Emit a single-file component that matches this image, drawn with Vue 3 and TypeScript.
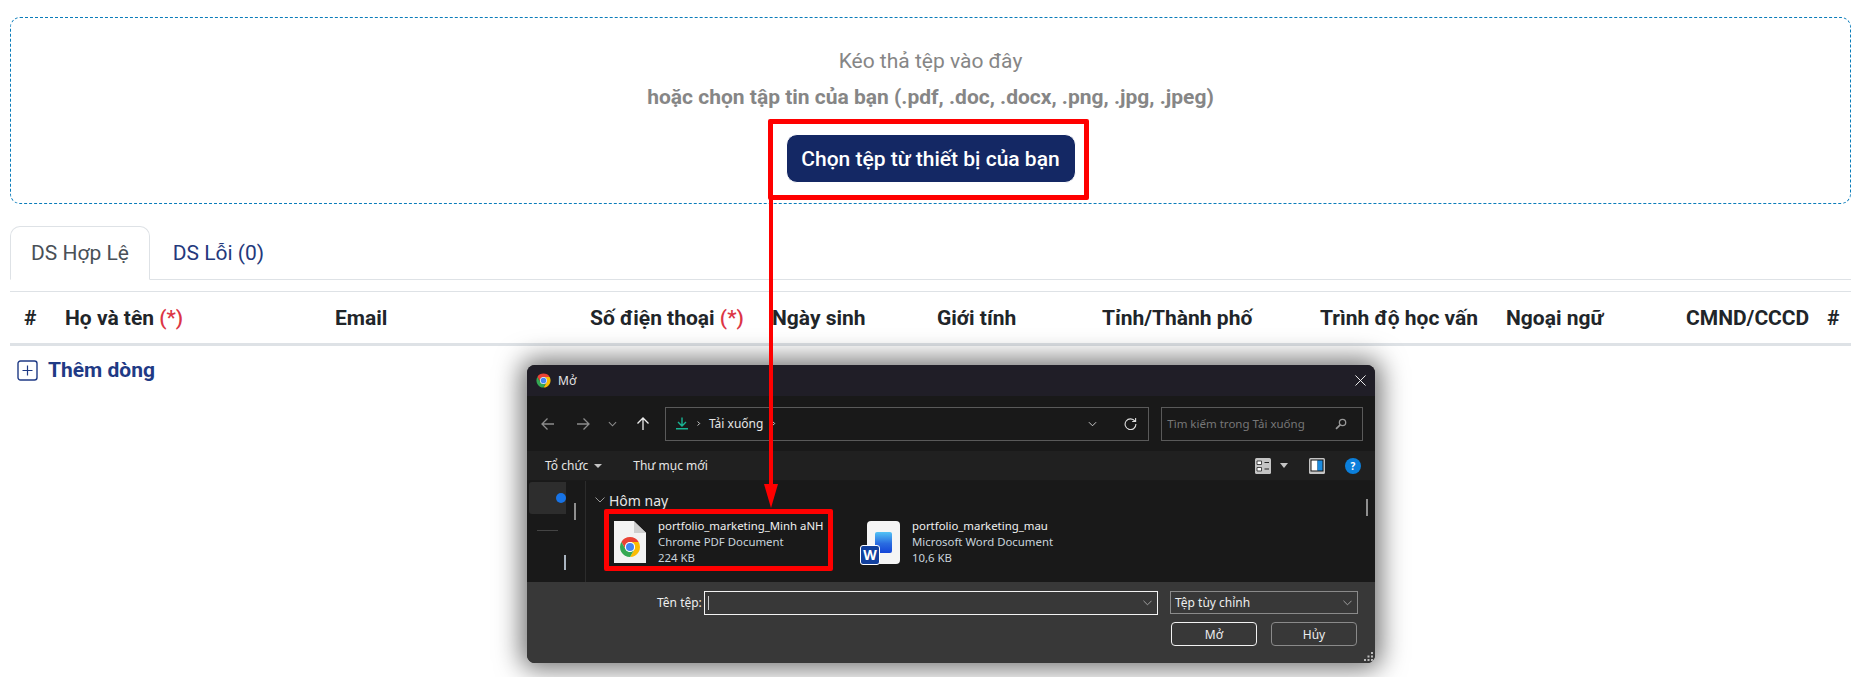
<script setup lang="ts">
const columns = [
  { label: 'Họ và tên', required: true },
  { label: 'Email' },
  { label: 'Số điện thoại', required: true },
  { label: 'Ngày sinh' },
  { label: 'Giới tính' },
  { label: 'Tỉnh/Thành phố' },
  { label: 'Trình độ học vấn' },
  { label: 'Ngoại ngữ' },
  { label: 'CMND/CCCD' },
]
</script>

<template>
  <div class="page">
    <section class="dropzone">
      <p class="drop-title">Kéo thả tệp vào đây</p>
      <p class="drop-sub">hoặc chọn tập tin của bạn (.pdf, .doc, .docx, .png, .jpg, .jpeg)</p>
      <button class="pick-btn">Chọn tệp từ thiết bị của bạn</button>
    </section>

    <nav class="tabs">
      <a class="tab active">DS Hợp Lệ</a>
      <a class="tab">DS Lỗi (0)</a>
    </nav>

    <div class="thead">
      <div class="th">#</div>
      <div v-for="col in columns" :key="col.label" class="th">
        {{ col.label }} <span v-if="col.required" class="req">(*)</span>
      </div>
      <div class="th">#</div>
    </div>

    <a class="add-row">
      <svg class="add-icon" viewBox="0 0 21 21" width="21" height="21" fill="none" stroke="#1f3a85">
        <rect x="1" y="1" width="19" height="19" rx="2.5" stroke-width="1.4" />
        <path d="M10.5 5.5v10M5.5 10.5h10" stroke-width="1.2" />
      </svg>
      Thêm dòng
    </a>

    <!-- pasted file dialog -->
    <div class="dialog">
      <div class="d-title">
        <svg viewBox="0 0 48 48" width="17" height="17">
          <path fill="#ea4335" d="M6.68 14A20 20 0 0 1 41.32 14H24A10 10 0 0 0 15.34 29Z" />
          <path fill="#fbbc04" d="M41.32 14A20 20 0 0 1 24 44L32.66 29A10 10 0 0 0 24 14Z" />
          <path fill="#34a853" d="M24 44A20 20 0 0 1 6.68 14L15.34 29A10 10 0 0 0 32.66 29Z" />
          <circle cx="24" cy="24" r="10" fill="#fff" />
          <circle cx="24" cy="24" r="8" fill="#4285f4" />
        </svg>
        <span>Mở</span>
        <svg class="d-close" viewBox="0 0 12 12" width="11" height="11" stroke="#fff" stroke-width="1"><path d="M.5.5l11 11M11.5.5l-11 11" /></svg>
      </div>

      <div class="d-nav">
        <span class="nav-slot">
          <svg viewBox="0 0 14 14" width="14" height="14" fill="none" stroke="#8c8c8c" stroke-width="1.3"><path d="M13 7H1M6.5 1.5L1 7l5.5 5.5" /></svg>
        </span>
        <span class="nav-slot gap">
          <svg viewBox="0 0 14 14" width="14" height="14" fill="none" stroke="#8c8c8c" stroke-width="1.3"><path d="M1 7h12M7.500 1.500L13 7l-5.500 5.500" /></svg>
        </span>
        <span class="nav-slot">
          <svg viewBox="0 0 10 6" width="9" height="6" fill="none" stroke="#8c8c8c" stroke-width="1.2"><path d="M1 1l4 4 4-4" /></svg>
        </span>
        <span class="nav-slot">
          <svg viewBox="0 0 14 14" width="14" height="14" fill="none" stroke="#eee" stroke-width="1.3"><path d="M7 13V1M1.500 6.500L7 1l5.500 5.500" /></svg>
        </span>
        <div class="address">
          <svg viewBox="0 0 12 12" width="12" height="13" fill="none" stroke="#19b394" stroke-width="1.4"><path d="M6 0v8M2 4.500L6 8.500l4-4M0 11.300h12" /></svg>
          <svg class="crumb" viewBox="0 0 6 8" width="4" height="7" fill="none" stroke="#eee" stroke-width="1.3"><path d="M1 1l3 3-3 3" /></svg>
          <span class="addr-text">Tải xuống</span>
          <svg class="crumb" viewBox="0 0 6 8" width="4" height="7" fill="none" stroke="#eee" stroke-width="1.3"><path d="M1 1l3 3-3 3" /></svg>
          <svg class="addr-chev" viewBox="0 0 10 6" width="9" height="6" fill="none" stroke="#ddd" stroke-width="1"><path d="M1 1l4 4 4-4" /></svg>
          <svg class="addr-refresh" viewBox="0 0 14 14" width="13" height="13" fill="none" stroke="#ddd" stroke-width="1.2"><path d="M11.800 4.500A5.800 5.800 0 1 0 12.800 7.500M12.500 1v3.800H8.800" /></svg>
        </div>
        <div class="search">
          <span>Tìm kiếm trong Tải xuống</span>
          <svg viewBox="0 0 14 14" width="12" height="12" fill="none" stroke="#999" stroke-width="1.5"><circle cx="8.800" cy="5.200" r="3.700" /><path d="M6 8L1.200 12.800" stroke-width="2" /></svg>
        </div>
      </div>

      <div class="d-tools">
        <span class="tool">Tổ chức</span>
        <i class="caret" />
        <span class="tool new-folder">Thư mục mới</span>
        <div class="tool-right">
          <svg viewBox="0 0 16 16" width="16" height="16">
            <rect width="16" height="16" rx="1.500" fill="#c4c4c4" />
            <path d="M2 3h4.500v3.500H2zM2 9.500h4.500V13H2z" fill="#fff" stroke="#222" stroke-width=".8" />
            <path d="M9.500 4.500H14M9.500 11H14" stroke="#222" />
          </svg>
          <i class="caret wide" />
          <svg class="pane" viewBox="0 0 16 16" width="16" height="16">
            <rect width="16" height="16" rx="1.500" fill="#c4c4c4" />
            <rect x="1.500" y="1.500" width="13" height="12" fill="#111" />
            <rect x="2.500" y="2.500" width="6" height="10" fill="#fff" />
            <rect x="8.500" y="2.500" width="5" height="10" fill="#1a8be0" />
          </svg>
          <span class="help">?</span>
        </div>
      </div>

      <div class="d-body">
        <aside class="d-side">
          <div class="side-tree">
            <div class="side-active">
              <svg viewBox="0 0 6 10" width="5" height="9" fill="none" stroke="#ddd" stroke-width="1.300"><path d="M1 1l4 4-4 4" /></svg>
              <i class="side-dot" />
            </div>
            <i class="side-sep" />
            <i class="side-pip" />
          </div>
          <div class="side-bar">
            <i class="bar-thumb" />
          </div>
        </aside>
        <div class="d-files">
          <div class="group">
            <svg viewBox="0 0 10 6" width="10" height="6" fill="none" stroke="#999"><path d="M.5.500L5 5 9.500.5" /></svg>
            <span>Hôm nay</span>
          </div>
          <div class="file-row">
            <div class="file first">
              <div class="doc-pdf">
                <i class="doc-fold" />
                <svg viewBox="0 0 48 48" width="24" height="24">
                  <path fill="#ea4335" d="M6.68 14A20 20 0 0 1 41.32 14H24A10 10 0 0 0 15.34 29Z" />
                  <path fill="#fbbc04" d="M41.32 14A20 20 0 0 1 24 44L32.66 29A10 10 0 0 0 24 14Z" />
                  <path fill="#34a853" d="M24 44A20 20 0 0 1 6.68 14L15.34 29A10 10 0 0 0 32.66 29Z" />
                  <circle cx="24" cy="24" r="10" fill="#fff" />
                  <circle cx="24" cy="24" r="8" fill="#4285f4" />
                </svg>
              </div>
              <div class="file-meta">
                <span class="file-name">portfolio_marketing_Minh aNH</span>
                <span>Chrome PDF Document</span>
                <span>224 KB</span>
              </div>
            </div>
            <div class="file">
              <div class="doc-word">
                <i class="word-blue" />
                <span class="word-badge">W</span>
              </div>
              <div class="file-meta">
                <span class="file-name">portfolio_marketing_mau</span>
                <span>Microsoft Word Document</span>
                <span>10,6 KB</span>
              </div>
            </div>
          </div>
          <div class="group clipped">
            <svg viewBox="0 0 6 10" width="6" height="10" fill="none" stroke="#999"><path d="M.5.500L5 5 .5 9.500" /></svg>
            <span>Tuần trước</span>
          </div>
        </div>
        <div class="d-scroll"><i /></div>
      </div>

      <div class="d-foot">
        <div class="foot-row">
          <label>Tên tệp:</label>
          <div class="name-input">
            <i class="text-caret" />
            <svg viewBox="0 0 10 6" width="9" height="6" fill="none" stroke="#aaa"><path d="M.5.500L5 5 9.500.5" /></svg>
          </div>
          <div class="type-select">
            <span>Tệp tùy chỉnh</span>
            <svg viewBox="0 0 10 6" width="9" height="6" fill="none" stroke="#aaa"><path d="M.5.500L5 5 9.500.5" /></svg>
          </div>
        </div>
        <div class="foot-btns">
          <button class="d-btn primary">Mở</button>
          <button class="d-btn">Hủy</button>
        </div>
        <svg class="grip" viewBox="0 0 9 9" width="9" height="9" fill="#bbb">
          <path d="M7 0h2v2H7zM3.500 3.500h2v2h-2zM7 3.500h2v2H7zM0 7h2v2H0zM3.500 7h2v2h-2zM7 7h2v2H7z" />
        </svg>
      </div>
    </div>

    <!-- red annotations on top of the screenshot -->
    <div class="mark mark-btn" />
    <div class="mark mark-file" />
    <svg class="arrow" viewBox="0 0 16 312" width="16" height="312">
      <path d="M6 0h4v288H6z" fill="#f00" />
      <path d="M1 286h14L8 310z" fill="#f00" />
    </svg>
  </div>
</template>

<style scoped>
.page {
  position: relative;
  width: 1864px;
  height: 677px;
  padding: 17px 13px 0 10px;
  box-sizing: border-box;
  overflow: hidden;
  background: #fff;
  font-family: Roboto, "Liberation Sans", sans-serif;
  color: #212529;
}

.dropzone {
  height: 187px;
  box-sizing: border-box;
  border: 1px dashed #0a7cba;
  border-radius: 10px;
  display: flex;
  flex-direction: column;
  align-items: center;
  padding-top: 31px;
}

.drop-title {
  margin: 0;
  font-size: 21px;
  line-height: 24px;
  color: #868686;
}

.drop-sub {
  margin: 12px 0 0;
  font-size: 21px;
  line-height: 24px;
  font-weight: 700;
  color: #868686;
}

.pick-btn {
  margin-top: 25px;
  width: 290px;
  height: 49px;
  border: 1px solid #fff;
  border-radius: 11px;
  background: #142864;
  color: #fff;
  font-family: inherit;
  font-size: 21px;
  font-weight: 500;
}

.tabs {
  display: flex;
  margin-top: 22px;
  height: 54px;
  border-bottom: 1px solid #dee2e6;
  box-sizing: border-box;
}

.tab {
  width: 140px;
  height: 54px;
  box-sizing: border-box;
  border: 1px solid transparent;
  border-radius: 10px 10px 0 0;
  display: flex;
  align-items: center;
  justify-content: center;
  font-size: 21px;
  color: #24397c;
}

.tab.active {
  color: #495057;
  border-color: #dee2e6 #dee2e6 #fff;
  background: #fff;
}

.tab:not(.active) {
  width: 137px;
}

.thead {
  margin-top: 11px;
  height: 55px;
  box-sizing: border-box;
  border-top: 1px solid #dee2e6;
  border-bottom: 3px solid #dee2e6;
  display: grid;
  grid-template-columns: 41px 270px 255px 182px 165px 165px 218px 186px 180px 141px 38px;
  align-items: center;
}

.th {
  padding-left: 14px;
  white-space: nowrap;
  font-size: 21px;
  font-weight: 700;
}

.req {
  color: #dc3545;
  font-weight: 500;
}

.add-row {
  display: flex;
  align-items: center;
  gap: 10px;
  margin: 12px 0 0 7px;
  font-size: 21px;
  font-weight: 700;
  color: #1f3a85;
}

/* dialog */
.dialog {
  position: absolute;
  left: 527px;
  top: 365px;
  width: 848px;
  height: 298px;
  display: flex;
  flex-direction: column;
  border-radius: 8px;
  overflow: hidden;
  box-shadow: 0 0 26px 6px rgba(0, 0, 0, 0.55);
  font-family: "Noto Sans", "Open Sans", sans-serif;
  font-size: 12px;
  color: #e6e6e6;
  background: #191919;
}

.d-title {
  height: 31px;
  flex: none;
  display: flex;
  align-items: center;
  gap: 6px;
  padding: 0 9px 0 8px;
  background: #201e27;
}

.d-close {
  margin-left: auto;
}

.d-nav {
  height: 55px;
  flex: none;
  display: flex;
  align-items: center;
  padding-left: 6px;
  box-sizing: border-box;
  padding-right: 12px;
}

.nav-slot {
  width: 30px;
  display: flex;
  justify-content: center;
}

.nav-slot.gap {
  margin-left: 5px;
}

.address {
  margin-left: 7px;
  width: 485px;
  height: 34px;
  box-sizing: border-box;
  border: 1px solid #5a5a5a;
  display: flex;
  align-items: center;
  padding-left: 10px;
}

.crumb {
  margin-left: 9px;
}

.addr-text {
  margin-left: 8px;
}

.addr-chev {
  margin-left: auto;
}

.addr-refresh {
  margin: 0 11px 0 27px;
}

.search {
  margin-left: 12px;
  width: 202px;
  height: 34px;
  box-sizing: border-box;
  border: 1px solid #5a5a5a;
  display: flex;
  align-items: center;
  justify-content: space-between;
  padding: 0 15px 0 5px;
  color: #777;
  font-size: 11.5px;
}

.d-tools {
  height: 30px;
  flex: none;
  display: flex;
  align-items: center;
  padding: 0 14px 0 18px;
  background: #202020;
  border-bottom: 1px solid #1a1a1a;
  box-sizing: border-box;
}

.caret {
  margin-left: 6px;
  border-left: 4px solid transparent;
  border-right: 4px solid transparent;
  border-top: 4px solid #c4c4c4;
}

.new-folder {
  margin-left: 31px;
}

.tool-right {
  margin-left: auto;
  display: flex;
  align-items: center;
}

.caret.wide {
  margin-left: 9px;
  border-left-width: 4.5px;
  border-right-width: 4.5px;
  border-top-width: 5px;
}

.pane {
  margin-left: 21px;
}

.help {
  margin-left: 20px;
  width: 16px;
  height: 16px;
  border-radius: 50%;
  background: #0b7fdb;
  color: #fff;
  font-size: 10px;
  font-weight: 700;
  display: flex;
  align-items: center;
  justify-content: center;
}

.d-body {
  height: 101px;
  flex: none;
  display: flex;
  overflow: hidden;
}

.d-side {
  width: 59px;
  flex: none;
  display: flex;
  border-right: 1px solid #2c2c2c;
  box-sizing: border-box;
}

.side-tree {
  width: 37px;
  flex: none;
  margin-left: 2px;
  display: flex;
  flex-direction: column;
  overflow: hidden;
}

.side-active {
  height: 32px;
  flex: none;
  margin-top: 1px;
  background: #2d2d2d;
  border-radius: 3px 0 0 3px;
  display: flex;
  align-items: center;
  padding-left: 12px;
  gap: 15px;
}

.side-dot {
  width: 10px;
  height: 10px;
  flex: none;
  border-radius: 50%;
  background: #1773e6;
}

.side-sep {
  width: 21px;
  height: 1px;
  margin: 16px 0 0 8px;
  background: #444;
}

.side-pip {
  align-self: flex-end;
  width: 2px;
  height: 15px;
  margin-top: 24px;
  background: #a9b4c0;
}

.side-bar {
  margin-left: 8px;
  display: flex;
  flex-direction: column;
}

.bar-thumb {
  width: 2px;
  height: 17px;
  margin-top: 22px;
  background: #8f8f8f;
}

.d-files {
  flex: 1;
  padding: 9px 0 0 9px;
  min-width: 0;
}

.group {
  display: flex;
  align-items: center;
  gap: 4px;
  height: 20px;
  font-size: 14px;
  color: #e6e6e6;
}

.group.clipped {
  margin-top: 12px;
  padding-left: 2px;
}

.file-row {
  display: flex;
  margin-top: 8px;
}

.file {
  display: flex;
  align-items: center;
  height: 48px;
}

.file.first {
  width: 271px;
  padding-left: 19px;
  box-sizing: border-box;
}

.doc-pdf {
  position: relative;
  width: 32px;
  height: 42px;
  flex: none;
  background: #f3f3f3;
  clip-path: polygon(0 0, 62% 0, 100% 28%, 100% 100%, 0 100%);
  display: flex;
  align-items: flex-end;
  justify-content: center;
  padding-bottom: 4px;
  box-sizing: border-box;
}

.doc-fold {
  position: absolute;
  left: 20px;
  top: 0;
  width: 12px;
  height: 12px;
  background: #cfcfcf;
  clip-path: polygon(0 0, 100% 100%, 0 100%);
}

.file-meta {
  margin-left: 12px;
  display: flex;
  flex-direction: column;
  font-size: 11.4px;
  line-height: 16px;
  color: #c8d4dc;
  white-space: nowrap;
}

.file-name {
  color: #f0f0f0;
}

.doc-word {
  position: relative;
  width: 33px;
  height: 43px;
  flex: none;
  margin-left: 1px;
  background: #f5f5f5;
  border-radius: 4px;
}

.word-blue {
  position: absolute;
  left: 8px;
  top: 11px;
  width: 17px;
  height: 21px;
  border-radius: 2px;
  background: linear-gradient(#52c2f5, #2a6be0 55%, #1546d8);
}

.word-badge {
  position: absolute;
  left: -7px;
  top: 24px;
  width: 20px;
  height: 20px;
  border-radius: 3px;
  background: #12409e;
  border: 1px solid #fff;
  box-sizing: border-box;
  color: #fff;
  font-size: 14px;
  font-weight: 700;
  line-height: 18px;
  text-align: center;
}

.d-scroll {
  width: 12px;
  flex: none;
}

.d-scroll i {
  display: block;
  width: 2px;
  height: 17px;
  margin: 18px 0 0 3px;
  background: #8f8f8f;
}

.d-foot {
  position: relative;
  flex: 1;
  background: #383838;
  padding-top: 9px;
  box-sizing: border-box;
}

.foot-row {
  display: flex;
  align-items: flex-start;
}

.foot-row label {
  margin-left: 130px;
  width: 47px;
  line-height: 24px;
  color: #eee;
}

.name-input {
  width: 454px;
  height: 24px;
  box-sizing: border-box;
  border: 1px solid #f2f2f2;
  display: flex;
  align-items: center;
  justify-content: space-between;
  padding: 0 5px 0 3px;
}

.text-caret {
  width: 1px;
  height: 14px;
  background: #ccc;
}

.type-select {
  margin-left: 12px;
  width: 188px;
  height: 23px;
  box-sizing: border-box;
  border: 1px solid #8a8a8a;
  display: flex;
  align-items: center;
  justify-content: space-between;
  padding: 0 5px 0 4px;
  color: #eee;
}

.foot-btns {
  display: flex;
  justify-content: flex-end;
  gap: 14px;
  margin: 7px 18px 0 0;
}

.d-btn {
  width: 86px;
  height: 24px;
  border: 1px solid #8a8a8a;
  border-radius: 4px;
  background: transparent;
  color: #eee;
  font-family: inherit;
  font-size: 12px;
  padding: 0;
}

.d-btn.primary {
  border-color: #f2f2f2;
}

.grip {
  position: absolute;
  right: 2px;
  bottom: 2px;
}

/* annotations */
.mark {
  position: absolute;
  box-sizing: border-box;
  border: 5px solid #f00;
  border-radius: 2px;
}

.mark-btn {
  left: 768px;
  top: 119px;
  width: 321px;
  height: 81px;
}

.mark-file {
  left: 604px;
  top: 509px;
  width: 229px;
  height: 62px;
}

.arrow {
  position: absolute;
  left: 763px;
  top: 198px;
}
</style>

<style>
body {
  background: #fff;
}
</style>
